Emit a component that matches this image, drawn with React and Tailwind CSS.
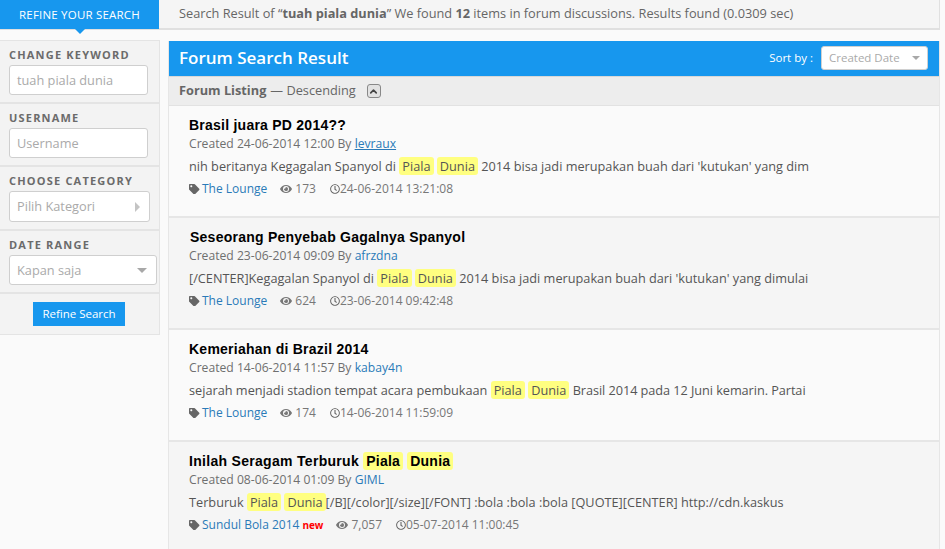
import React from "react";
import { ChevronUp } from "lucide-react";
import { FaTag, FaEye, FaRegClock } from "react-icons/fa";

const Hl = ({ children, big }) => (
   <span className={`bg-[#ffff80] rounded-[3px] px-[3px] ${big ? "py-[1px]" : ""}`}>{children}</span>
);

const rows = [
   {
      title: "Brasil juara PD 2014??",
      created: "24-06-2014 12:00",
      by: "levraux",
      underline: true,
      body: (
         <>
            nih beritanya Kegagalan Spanyol di <Hl>Piala</Hl> <Hl>Dunia</Hl> 2014 bisa jadi merupakan buah dari 'kutukan' yang dim
         </>
      ),
      tag: "The Lounge",
      views: "173",
      time: "24-06-2014 13:21:08",
   },
   {
      title: "Seseorang Penyebab Gagalnya Spanyol",
      created: "23-06-2014 09:09",
      by: "afrzdna",
      indent: true,
      body: (
         <>
            [/CENTER]Kegagalan Spanyol di <Hl>Piala</Hl> <Hl>Dunia</Hl> 2014 bisa jadi merupakan buah dari 'kutukan' yang dimulai
         </>
      ),
      tag: "The Lounge",
      views: "624",
      time: "23-06-2014 09:42:48",
   },
   {
      title: "Kemeriahan di Brazil 2014",
      created: "14-06-2014 11:57",
      by: "kabay4n",
      body: (
         <>
            sejarah menjadi stadion tempat acara pembukaan <Hl>Piala</Hl> <Hl>Dunia</Hl>{" "}
            <span className="tracking-[-0.06px]">Brasil 2014 pada 12 Juni kemarin. Partai</span>
         </>
      ),
      tag: "The Lounge",
      views: "174",
      time: "14-06-2014 11:59:09",
   },
   {
      title: (
         <>
            <span className="tracking-[0.3px]">Inilah Seragam Terburuk</span> <Hl big>Piala</Hl> <Hl big>Dunia</Hl>
         </>
      ),
      created: "08-06-2014 01:09",
      by: "GIML",
      body: (
         <>
            Terburuk <Hl>Piala</Hl> <Hl>Dunia</Hl>[/B][/color][/size][/FONT] :bola :bola :bola [QUOTE][CENTER] http://cdn.kaskus
         </>
      ),
      tag: "Sundul Bola 2014",
      isNew: true,
      views: "7,057",
      time: "05-07-2014 11:00:45",
   },
];

const Field = ({ label, value, width, arrow, tall }) => (
   <div className={`border-b-2 border-[#e4e4e4] pl-[9px] pt-[7px] ${tall ? "h-[64px]" : "h-[63px]"}`}>
      <div className="text-[11px] leading-[14px] font-bold tracking-[1.2px] text-[#6b6b6b]">{label}</div>
      <div className={`${width} ${tall ? "h-[31px]" : "h-[30px]"} mt-[3px] bg-white border border-[#cfcfcf] rounded-[3px] pl-[7px] pr-[9px] flex items-center justify-between text-[12.75px] text-[#aaaaaa]`}>
         <span className={tall ? "" : "pt-[2px]"}>{value}</span>
         {arrow === "right" && <span className="border-y-[5px] border-y-transparent border-l-[5px] border-l-[#c4c4c4]"></span>}
         {arrow === "down" && <span className="border-x-[5px] border-x-transparent border-t-[5px] border-t-[#a8a8a8]"></span>}
      </div>
   </div>
);

const Row = ({ row, shade }) => (
   <div className={`h-[112px] border-b-2 border-[#e6e6e6] pl-[20px] pt-[11px] ${shade ? "bg-[#f5f5f5]" : "bg-[#fafafa]"}`}>
      <div className={`font-['Liberation_Sans',sans-serif] font-bold text-[14px] leading-[17px] tracking-[0.24px] text-black ${row.indent ? "ml-[1px]" : ""}`}>{row.title}</div>
      <div className="text-[12.15px] leading-[17px] mt-[1px] text-[#6f6f6f]">
         Created {row.created} By{" "}
         <span className={`text-[#2a7ab8] ${row.underline ? "underline" : ""}`}>{row.by}</span>
      </div>
      <div className="text-[12.73px] leading-[18px] mt-[5px] text-[#555555] whitespace-nowrap">{row.body}</div>
      <div className="flex items-center text-[12px] leading-[18px] mt-[5px] text-[#777777]">
         <FaTag className="w-[10.5px] h-[10.5px] text-[#666666] mr-[2.5px]" />
         <span className="text-[#2a7ab8]">{row.tag}</span>
         {row.isNew && <span className="text-[10px] font-bold text-[#ff0000] ml-[3px]">new</span>}
         <FaEye className="w-[12px] h-[12px] text-[#777777] ml-[13px] mr-[3px]" />
         <span>{row.views}</span>
         <FaRegClock className="w-[10px] h-[10px] text-[#666666] ml-[14px]" />
         <span>{row.time}</span>
      </div>
   </div>
);

export default function App() {
   return (
      <div className="w-[945px] h-[549px] overflow-hidden bg-[#fafafa] font-['Open_Sans',sans-serif]">
         <div className="flex h-[30px] mr-[5px] bg-[#f5f5f5] border-b-2 border-r-1 border-[#e0e0e0]">
            <div className="relative w-[159px] h-[29px] shrink-0 bg-[#1797ee] text-white text-[11.5px] tracking-[0.2px] flex items-center justify-center">
               REFINE YOUR SEARCH
               <span className="absolute left-[75px] top-[29px] border-x-[5px] border-x-transparent border-t-[5px] border-t-[#1797ee]"></span>
            </div>
            <div className="pl-[20px] text-[12.75px] leading-[27px] text-[#666666] whitespace-nowrap">
               Search Result of “<b>tuah piala dunia</b>” We found <b>12</b> items in forum discussions. Results found (0.0309 sec)
            </div>
         </div>
         <div className="flex items-start mt-[10px]">
            <div className="w-[160px] h-[295px] shrink-0 bg-[#f3f3f3] border-t-1 border-r-1 border-b-1 border-[#e4e4e4]">
               <Field label="CHANGE KEYWORD" value="tuah piala dunia" width="w-[139px]" />
               <Field label="USERNAME" value="Username" width="w-[139px]" />
               <Field label="CHOOSE CATEGORY" value="Pilih Kategori" width="w-[141px]" arrow="right" tall />
               <Field label="DATE RANGE" value="Kapan saja" width="w-[148px]" arrow="down" />
               <div className="pl-[33px] pt-[8px]">
                  <div className="w-[92px] h-[24px] bg-[#1797ee] text-white text-[11.5px] flex items-center justify-center">Refine Search</div>
               </div>
            </div>
            <div className="w-[772px] ml-[8px] mt-[1px] shrink-0 border-x-1 border-[#e6e6e6]">
               <div className="h-[36px] bg-[#1797ee] border-b-1 border-[#d8d8d8] flex items-center justify-between pl-[10px] pr-[11px] pb-[1px]">
                  <div className="text-white font-semibold text-[17px]">Forum Search Result</div>
                  <div className="flex items-center">
                     <span className="text-white text-[11.5px] mr-[8px]">Sort by :</span>
                     <div className="w-[107px] h-[24px] bg-white border border-[#d0d0d0] rounded-[3px] pl-[7px] pr-[7px] flex items-center justify-between text-[11.5px] text-[#aaaaaa]">
                        <span>Created Date</span>
                        <span className="border-x-[4px] border-x-transparent border-t-[4px] border-t-[#a8a8a8]"></span>
                     </div>
                  </div>
               </div>
               <div className="h-[29px] bg-[#ededed] border-b-1 border-[#e2e2e2] pl-[10px] flex items-center text-[12.75px] text-[#666666]">
                  <b>Forum Listing</b>
                  <span className="ml-[4px]">— Descending</span>
                  <span className="ml-[11px] w-[14px] h-[14px] bg-[#e2e2e2] border border-[#888888] rounded-[3px] flex items-center justify-center">
                     <ChevronUp className="w-[11px] h-[11px] text-[#444444]" strokeWidth={3.5} />
                  </span>
               </div>
               {rows.map((row, i) => (
                  <Row key={i} row={row} shade={i % 2 === 1} />
               ))}
            </div>
         </div>
      </div>
   );
}
